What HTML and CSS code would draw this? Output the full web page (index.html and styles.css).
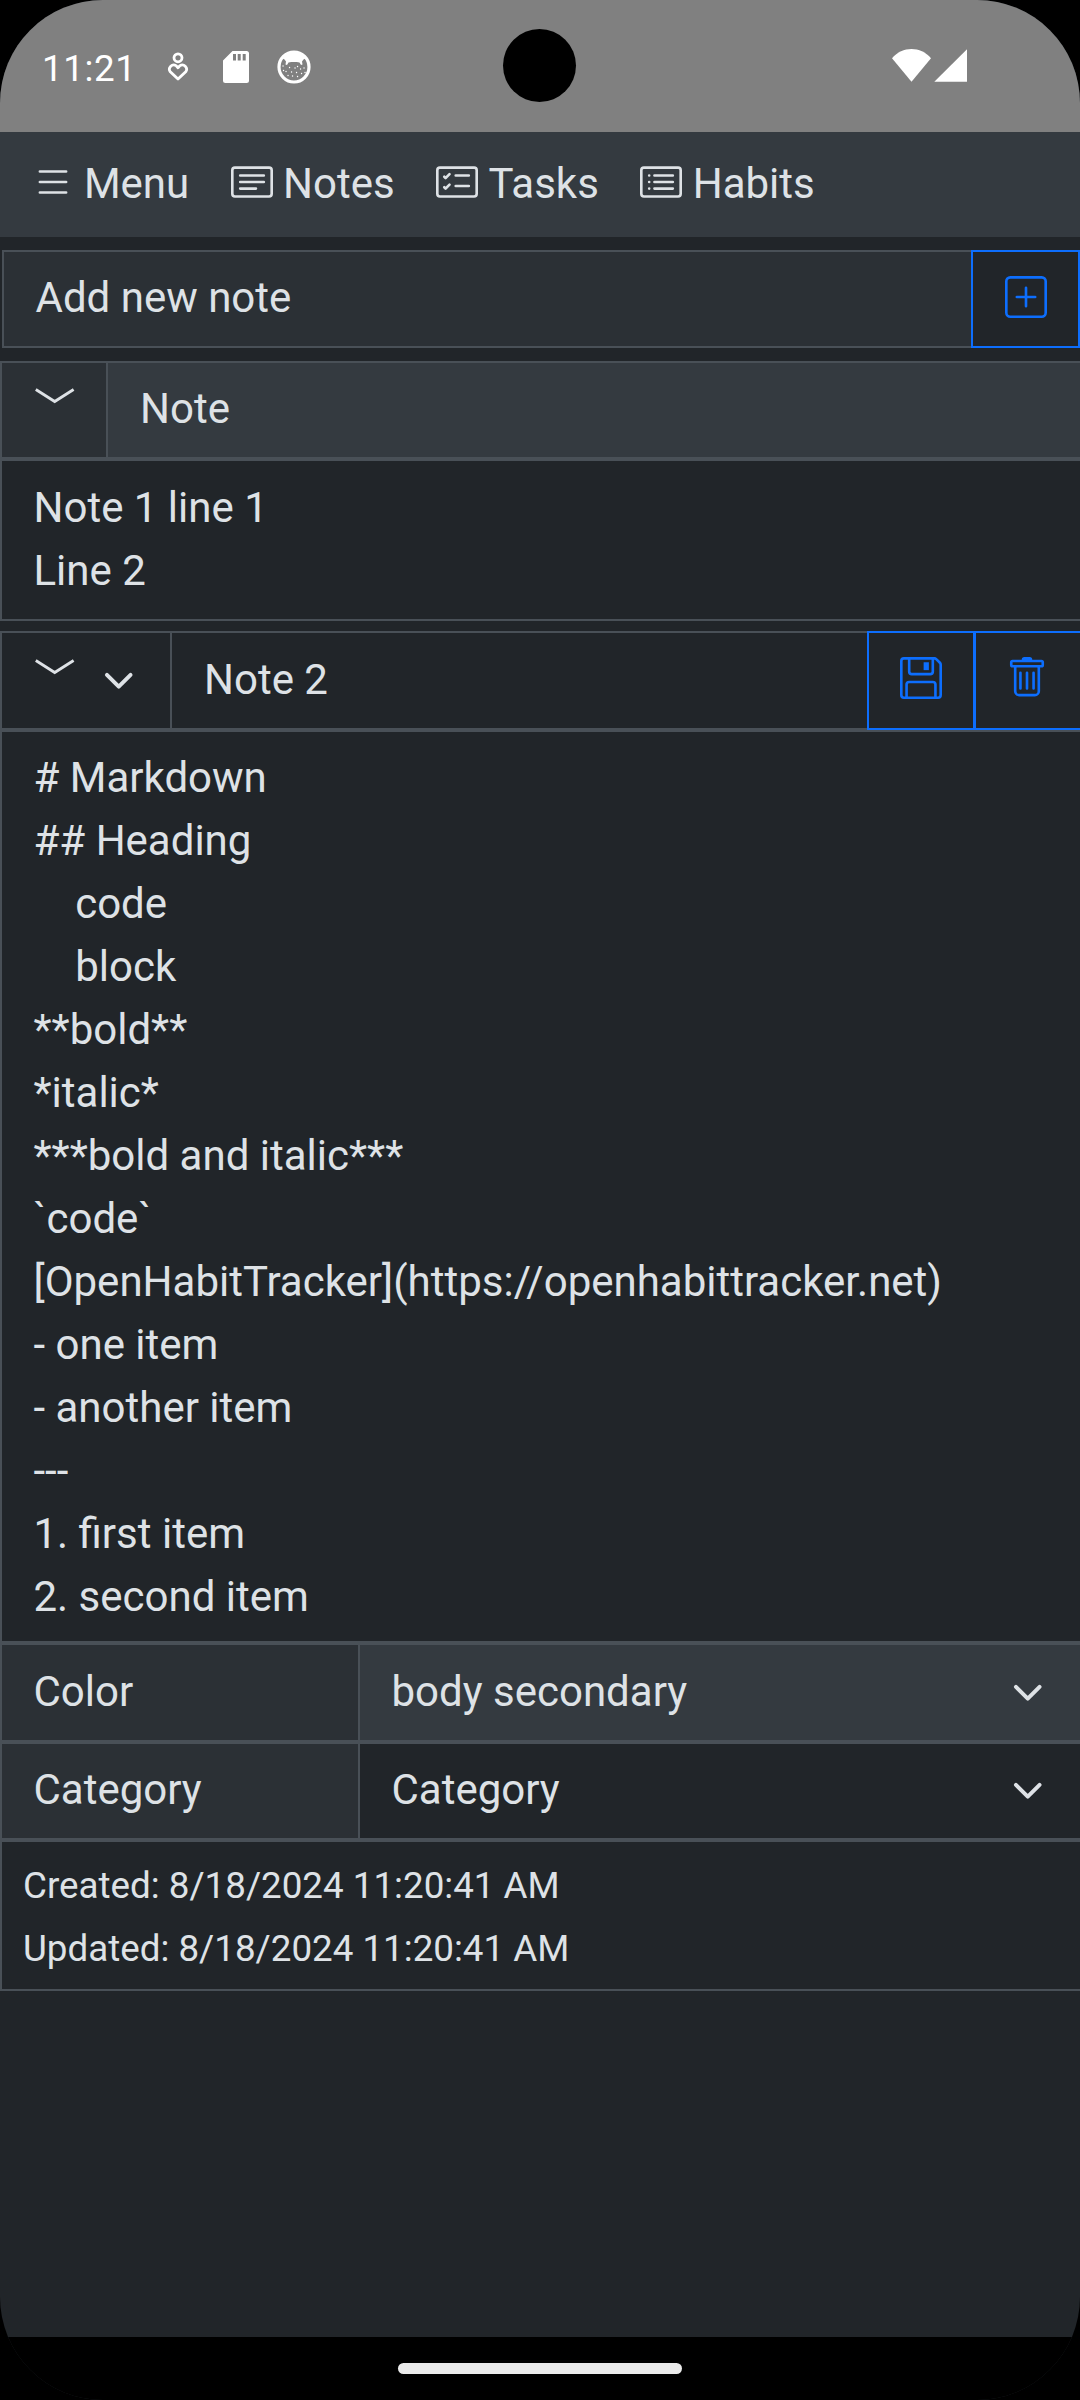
FILE: index.html
```html
<!DOCTYPE html>
<html lang="en">
<head>
<meta charset="utf-8">
<title>OpenHabitTracker</title>
<link rel="stylesheet" href="styles.css">
</head>
<body>
<div class="screen">
  <header class="status">
    <span class="clock">11:21</span>
    <svg class="status-heart" viewBox="0 0 22 30" fill="none" stroke="#fff" stroke-width="2.8">
      <circle cx="11" cy="5.800" r="4"/>
      <path d="M11 27 3 19.400A4.300 4.300 0 0 1 9 13.600L11 15.800l2-2.200A4.300 4.300 0 0 1 19 19.400Z" stroke-linejoin="round"/>
    </svg>
    <svg class="status-sd" viewBox="0 0 26 32">
      <path fill="#fff" d="M9.500 0H23.500A2.500 2.500 0 0 1 26 2.500V29.500A2.500 2.500 0 0 1 23.500 32H2.500A2.500 2.500 0 0 1 0 29.500V9.500Z"/>
      <path fill="#808080" d="M10 3h3v6.500h-3zM14.700 3h3v6.500h-3zM19.700 3h3v6.500h-3z"/>
    </svg>
    <svg class="status-cat" viewBox="0 0 34 34">
      <circle cx="17" cy="17" r="15" fill="none" stroke="#fff" stroke-width="3.200"/>
      <path fill="#fff" d="M5 8A15 15 0 0 1 29 8L26.500 9.500 25 11.500l.5 3-1.500.5-1.500-2.500c-3.500-.6-7.500-.6-11 0L10 15l-1.500-.5.5-3L7.500 9.500Z"/>
      <path stroke="#fff" stroke-width="1.300" stroke-linecap="round" d="M6 16h.1M9 21.500h.1M12.500 17.500h.1M14.500 22h.1M18 18h.1M20.500 16.500h.1M19.500 22.500h.1M23.500 19h.1M27 18h.1M24.500 23.500h.1M28 22.500h.1M15.500 26h.1M11 25.500h.1M20.500 26.500h.1M6.500 20.500h.1"/>
    </svg>
    <span class="camera"></span>
    <svg class="status-signal" viewBox="0 0 75 33" fill="#fff">
      <path d="M0 9.200C10.500-3 28.500-3 39 9.200L19.500 32.700Z"/>
      <path d="M75 .3V32.700H42.300Z"/>
    </svg>
  </header>

  <nav class="nav">
    <a class="nav-item"><svg class="icon" viewBox="0 0 16 16"><path d="M2.500 12a.5.5 0 0 1 .5-.5h10a.5.5 0 0 1 0 1H3a.5.5 0 0 1-.5-.5m0-4a.5.5 0 0 1 .5-.5h10a.5.5 0 0 1 0 1H3a.5.5 0 0 1-.5-.5m0-4a.5.5 0 0 1 .5-.5h10a.5.5 0 0 1 0 1H3a.5.5 0 0 1-.5-.5"/></svg><span>Menu</span></a>
    <a class="nav-item"><svg class="icon" viewBox="0 0 16 16"><path d="M14.500 3a.5.5 0 0 1 .5.5v9a.5.5 0 0 1-.5.5h-13a.5.5 0 0 1-.5-.5v-9a.5.5 0 0 1 .5-.5zm-13-1A1.500 1.500 0 0 0 0 3.500v9A1.500 1.500 0 0 0 1.500 14h13a1.500 1.500 0 0 0 1.500-1.500v-9A1.500 1.500 0 0 0 14.500 2z"/><path d="M3 5.500a.5.5 0 0 1 .5-.5h9a.5.5 0 0 1 0 1h-9a.5.5 0 0 1-.5-.5M3 8a.5.5 0 0 1 .5-.5h9a.5.5 0 0 1 0 1h-9A.5.5 0 0 1 3 8m0 2.500a.5.5 0 0 1 .5-.5h6a.5.5 0 0 1 0 1h-6a.5.5 0 0 1-.5-.5"/></svg><span>Notes</span></a>
    <a class="nav-item"><svg class="icon" viewBox="0 0 16 16"><path d="M14.500 3a.5.5 0 0 1 .5.5v9a.5.5 0 0 1-.5.5h-13a.5.5 0 0 1-.5-.5v-9a.5.5 0 0 1 .5-.5zm-13-1A1.500 1.500 0 0 0 0 3.500v9A1.500 1.500 0 0 0 1.500 14h13a1.500 1.500 0 0 0 1.500-1.500v-9A1.500 1.500 0 0 0 14.500 2z"/><path d="M7 5.500a.5.5 0 0 1 .5-.5h5a.5.5 0 0 1 0 1h-5a.5.5 0 0 1-.5-.5m-1.496-.854a.5.5 0 0 1 0 .708l-1.500 1.500a.5.5 0 0 1-.708 0l-.5-.5a.5.5 0 1 1 .708-.708l.146.147 1.146-1.147a.5.5 0 0 1 .708 0M7 9.500a.5.5 0 0 1 .5-.5h5a.5.5 0 0 1 0 1h-5a.5.5 0 0 1-.5-.5m-1.496-.854a.5.5 0 0 1 0 .708l-1.500 1.500a.5.5 0 0 1-.708 0l-.5-.5a.5.5 0 0 1 .708-.708l.146.147 1.146-1.147a.5.5 0 0 1 .708 0"/></svg><span>Tasks</span></a>
    <a class="nav-item"><svg class="icon" viewBox="0 0 16 16"><path d="M14.500 3a.5.5 0 0 1 .5.5v9a.5.5 0 0 1-.5.5h-13a.5.5 0 0 1-.5-.5v-9a.5.5 0 0 1 .5-.5zm-13-1A1.500 1.500 0 0 0 0 3.500v9A1.500 1.500 0 0 0 1.500 14h13a1.500 1.500 0 0 0 1.500-1.500v-9A1.500 1.500 0 0 0 14.500 2z"/><path d="M5 8a.5.5 0 0 1 .5-.5h7a.5.5 0 0 1 0 1h-7A.5.5 0 0 1 5 8m0-2.500a.5.5 0 0 1 .5-.5h7a.5.5 0 0 1 0 1h-7a.5.5 0 0 1-.5-.5m0 5a.5.5 0 0 1 .5-.5h7a.5.5 0 0 1 0 1h-7a.5.5 0 0 1-.5-.5m-1-5a.5.5 0 1 1-1 0 .5.5 0 0 1 1 0M4 8a.5.5 0 1 1-1 0 .5.5 0 0 1 1 0m0 2.500a.5.5 0 1 1-1 0 .5.5 0 0 1 1 0"/></svg><span>Habits</span></a>
  </nav>

  <main class="content">
    <div class="add-row">
      <div class="add-input">Add new note</div>
      <button class="btn btn-add"><svg class="icon" viewBox="0 0 16 16"><path d="M14 1a1 1 0 0 1 1 1v12a1 1 0 0 1-1 1H2a1 1 0 0 1-1-1V2a1 1 0 0 1 1-1zM2 0a2 2 0 0 0-2 2v12a2 2 0 0 0 2 2h12a2 2 0 0 0 2-2V2a2 2 0 0 0-2-2z"/><path d="M8 4a.5.5 0 0 1 .5.5v3h3a.5.5 0 0 1 0 1h-3v3a.5.5 0 0 1-1 0v-3h-3a.5.5 0 0 1 0-1h3v-3A.5.5 0 0 1 8 4"/></svg></button>
    </div>

    <section class="note">
      <div class="note-head">
        <div class="toggle toggle-filled"><svg class="caret" viewBox="0 0 40 16"><path d="M.8 1.500 19.700 13.500 38.600 1.500"/></svg></div>
        <div class="note-title title-filled">Note</div>
      </div>
      <div class="note-body">Note 1 line 1
Line 2</div>
    </section>

    <section class="note note-open">
      <div class="note-head note-head-edit">
        <div class="toggle toggle-select"><svg class="caret" viewBox="0 0 40 16"><path d="M.8 1.500 19.700 13.500 38.600 1.500"/></svg><svg class="arrow" viewBox="0 0 16 16"><path d="m2 5 6 6 6-6"/></svg></div>
        <div class="note-title">Note 2</div>
        <button class="btn btn-save"><svg class="icon" viewBox="0 0 16 16"><path d="M11 2H9v3h2z"/><path d="M1.500 0h11.586a1.500 1.500 0 0 1 1.060.44l1.415 1.414A1.500 1.500 0 0 1 16 2.914V14.500a1.500 1.500 0 0 1-1.500 1.500h-13A1.500 1.500 0 0 1 0 14.500v-13A1.500 1.500 0 0 1 1.500 0M1 1.500v13a.5.5 0 0 0 .5.5H2v-4.500A1.500 1.500 0 0 1 3.500 9h9a1.500 1.500 0 0 1 1.500 1.500V15h.5a.5.5 0 0 0 .5-.5V2.914a.5.5 0 0 0-.146-.353l-1.415-1.415A.5.5 0 0 0 13.086 1H13v4.500A1.500 1.500 0 0 1 11.500 7h-7A1.500 1.500 0 0 1 3 5.500V1H1.500a.5.5 0 0 0-.5.5m3 4a.5.5 0 0 0 .5.5h7a.5.5 0 0 0 .5-.5V1H4zM3 15h10v-4.500a.5.5 0 0 0-.5-.5h-9a.5.5 0 0 0-.5.5z"/></svg></button>
        <button class="btn btn-delete"><svg class="icon" viewBox="0 0 16 16"><path d="M5.500 5.500A.5.5 0 0 1 6 6v6a.5.5 0 0 1-1 0V6a.5.5 0 0 1 .5-.5m2.500 0a.5.5 0 0 1 .5.5v6a.5.5 0 0 1-1 0V6a.5.5 0 0 1 .5-.5m3 .5a.5.5 0 0 0-1 0v6a.5.5 0 0 0 1 0z"/><path d="M14.500 3a1 1 0 0 1-1 1H13v9a2 2 0 0 1-2 2H5a2 2 0 0 1-2-2V4h-.5a1 1 0 0 1-1-1V2a1 1 0 0 1 1-1H6a1 1 0 0 1 1-1h2a1 1 0 0 1 1 1h3.500a1 1 0 0 1 1 1zM4.118 4 4 4.059V13a1 1 0 0 0 1 1h6a1 1 0 0 0 1-1V4.059L11.882 4zM2.500 3h11V2h-11z"/></svg></button>
      </div>
      <div class="note-body note-editor"># Markdown
## Heading
    code
    block
**bold**
*italic*
***bold and italic***
`code`
[OpenHabitTracker](https://openhabittracker.net)
- one item
- another item
---
1. first item
2. second item</div>
      <div class="field">
        <div class="field-label">Color</div>
        <div class="field-value value-filled"><span>body secondary</span><svg class="arrow" viewBox="0 0 16 16"><path d="m2 5 6 6 6-6"/></svg></div>
      </div>
      <div class="field field-category">
        <div class="field-label">Category</div>
        <div class="field-value"><span>Category</span><svg class="arrow" viewBox="0 0 16 16"><path d="m2 5 6 6 6-6"/></svg></div>
      </div>
      <div class="dates">
        <div>Created: 8/18/2024 11:20:41 AM</div>
        <div>Updated: 8/18/2024 11:20:41 AM</div>
      </div>
    </section>
  </main>

  <footer class="gesture-bar"><span class="pill"></span></footer>
</div>
</body>
</html>
```
FILE: styles.css
```css
:root {
  --body: #212529;
  --secondary: #343a40;
  --tertiary: #2b3035;
  --border: #495057;
  --text: #dee2e6;
  --primary: #0d6efd;
}

* { box-sizing: border-box; }

body {
  margin: 0;
  background: #000;
  font: 42px/63px Roboto, sans-serif;
  color: var(--text);
}

svg { display: block; flex: none; }

.screen {
  display: flex;
  flex-direction: column;
  width: 1080px;
  height: 2400px;
  border-radius: 103px;
  overflow: hidden;
  background: var(--body);
}

/* Status bar */
.status {
  position: relative;
  display: flex;
  align-items: flex-start;
  height: 132px;
  padding: 0 113px 0 42px;
  background: #808080;
  color: #fff;
}

.clock {
  width: 125px;
  padding-top: 37px;
  font-size: 36.75px;
  letter-spacing: 0.6px;
}

.status-heart { width: 22px; height: 30px; margin-top: 52px; }
.status-sd { width: 26px; height: 32px; margin: 51px 0 0 34px; }
.status-cat { width: 34px; height: 34px; margin: 50px 0 0 28px; }
.status-signal { width: 75px; height: 33px; margin: 49px 0 0 auto; }

.camera {
  position: absolute;
  left: 503px;
  top: 29px;
  width: 73px;
  height: 73px;
  border-radius: 50%;
  background: #000;
}

/* Navigation */
.nav {
  display: flex;
  gap: 41.5px;
  height: 105px;
  padding: 20px 31.5px;
  background: var(--secondary);
}

.nav-item { display: flex; gap: 10.4px; }
.nav-item .icon { margin-top: 9px; }

.icon { width: 42px; height: 42px; fill: currentColor; }

.content { flex: 1; width: 1082px; padding-top: 13px; }

.btn {
  flex: none;
  display: flex;
  justify-content: center;
  margin: 0;
  padding: 24px 0 0;
  border: 2px solid var(--primary);
  background: transparent;
  color: var(--primary);
}

.add-row {
  display: flex;
  width: 1080px;
  height: 98px;
  padding-left: 2px;
}

.add-input {
  flex: 1;
  padding: 14px 31.5px 0;
  border: 2px solid var(--border);
  border-right: 0;
  background: var(--tertiary);
}

.btn-add { width: 109px; }

/* Notes */
.note { margin-top: 13px; }
.note-open { margin-top: 10px; }

.note-head {
  display: flex;
  height: 98px;
}

.note-head-edit { height: 99px; }

.toggle {
  display: flex;
  align-items: center;
  width: 106px;
  padding-left: 33px;
  border: 2px solid var(--border);
  border-right: 0;
}

.toggle-filled { background: var(--tertiary); }
.toggle-select { width: 170px; }

.caret {
  width: 40px;
  height: 16px;
  align-self: flex-start;
  margin-top: 25px;
  fill: none;
  stroke: var(--text);
  stroke-width: 2.8px;
}

.note-head-edit .caret { margin-top: 26px; }

.arrow {
  width: 31.5px;
  height: 31.5px;
  fill: none;
  stroke: var(--text);
  stroke-width: 2;
  stroke-linecap: round;
  stroke-linejoin: round;
}

.toggle .arrow { margin-left: 28px; }

.note-title {
  flex: 1;
  padding: 14px 32px 0;
  border: 2px solid var(--border);
}

.note-head-edit .note-title { padding-top: 15px; border-right: 0; }
.title-filled { background: var(--secondary); }

.btn-save { width: 108px; }
.btn-delete { width: 108px; margin-left: -1px; padding-right: 2px; }

.note-body {
  height: 162px;
  padding: 15px 31.5px 0;
  border: 2px solid var(--border);
  white-space: pre;
}

.note-editor { height: 913px; padding-top: 14px; }

.field { display: flex; height: 99px; }

.field-label {
  width: 358px;
  padding: 15px 31.5px 0;
  border: 2px solid var(--border);
  border-right: 0;
  background: var(--tertiary);
}

.field-value {
  flex: 1;
  display: flex;
  justify-content: space-between;
  padding: 15px 36.5px 0 31.5px;
  border: 2px solid var(--border);
}

.value-filled { background: var(--secondary); }
.field-value .arrow { margin-top: 17px; }

.field-category { height: 98px; }
.field-category .field-label,
.field-category .field-value { padding-top: 14px; }

.dates {
  height: 151px;
  padding: 12px 21px 0;
  border: 2px solid var(--border);
  font-size: 36.75px;
}

/* System gesture bar */
.gesture-bar {
  display: flex;
  justify-content: center;
  height: 63px;
  padding-top: 26px;
  background: #000;
}

.pill {
  width: 284px;
  height: 11px;
  border-radius: 5.5px;
  background: #ebebeb;
}
```
